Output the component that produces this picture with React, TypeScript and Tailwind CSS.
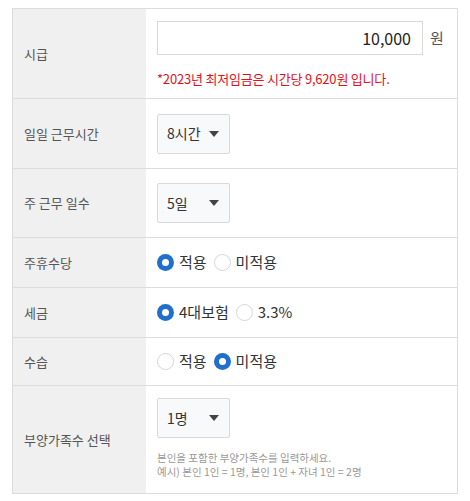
import React from "react";

const font = { fontFamily: '"Noto Sans CJK KR", "Noto Sans", sans-serif' };

function Radio({ checked, label }: { checked?: boolean; label: string }) {
    return (
        <label className="flex items-center gap-[5px] mr-[7px]">
            {checked ? (
                <span className="w-[17px] h-[17px] rounded-full bg-[#1f6fcb] flex items-center justify-center">
                    <span className="w-[7px] h-[7px] rounded-full bg-white" />
                </span>
            ) : (
                <span className="w-[17px] h-[17px] rounded-full border border-[#d6d6d6] bg-white" />
            )}
            <span className="text-[15px] text-[#333]">{label}</span>
        </label>
    );
}

function Select({ value }: { value: string }) {
    return (
        <div className="w-[73px] h-[40px] border border-[#d9d9d9] rounded-[2px] bg-[#f8f9fa] flex items-center justify-between pl-[9px] pr-[10px]">
            <span className="text-[14px] text-[#333]">{value}</span>
            <svg width="10" height="6" viewBox="0 0 10 6"><path d="M0 0h10L5 6z" fill="#444" /></svg>
        </div>
    );
}

function Row({ label, h, children, top }: { label: string; h: string; children: React.ReactNode; top?: boolean }) {
    return (
        <div className={`flex border-b border-[#dcdcdc] ${h}`}>
            <div className="w-[133px] bg-[#f0f0f0] flex items-center pl-[11px] text-[13px] text-[#555]">{label}</div>
            <div className={`flex-1 flex flex-col pl-[11px] ${top ? "" : "justify-center"}`}>{children}</div>
        </div>
    );
}

export default function App() {
    return (
        <div className="bg-white w-[470px] h-[501px] pt-[8px] pl-[12px]" style={font}>
            <div className="w-[446px] border-t border-l border-r border-[#dcdcdc]">
                <Row label="시급" h="h-[90px]" top>
                    <div className="flex items-center mt-[12px]">
                        <div className="w-[266px] h-[34px] border border-[#d9d9d9] flex items-center justify-end pr-[11px] text-[16px] text-[#222]">10,000</div>
                        <span className="ml-[7px] text-[15px] text-[#555]">원</span>
                    </div>
                    <p className="mt-[14px] text-[13px] text-[#e5101d] tracking-[-0.2px]">*2023년 최저임금은 시간당 9,620원 입니다.</p>
                </Row>
                <Row label="일일 근무시간" h="h-[70px]">
                    <Select value="8시간" />
                </Row>
                <Row label="주 근무 일수" h="h-[69px]">
                    <Select value="5일" />
                </Row>
                <Row label="주휴수당" h="h-[50px]">
                    <div className="flex items-center">
                        <Radio checked label="적용" />
                        <Radio label="미적용" />
                    </div>
                </Row>
                <Row label="세금" h="h-[50px]">
                    <div className="flex items-center">
                        <Radio checked label="4대보험" />
                        <Radio label="3.3%" />
                    </div>
                </Row>
                <Row label="수습" h="h-[48px]">
                    <div className="flex items-center">
                        <Radio label="적용" />
                        <Radio checked label="미적용" />
                    </div>
                </Row>
                <Row label="부양가족수 선택" h="h-[108px]" top>
                    <div className="mt-[12px]">
                        <Select value="1명" />
                    </div>
                    <p className="mt-[13px] text-[10.5px] leading-[14px] text-[#999]">
                        본인을 포함한 부양가족수를 입력하세요.<br />
                        예시) 본인 1인 = 1명, 본인 1인 + 자녀 1인 = 2명
                    </p>
                </Row>
            </div>
        </div>
    );
}
